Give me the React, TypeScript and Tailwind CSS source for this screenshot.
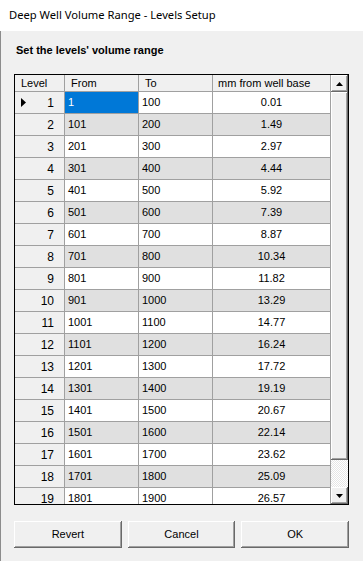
import React from "react"

const mm = [
  "0.01", "1.49", "2.97", "4.44", "5.92", "7.39", "8.87", "10.34", "11.82", "13.29",
  "14.77", "16.24", "17.72", "19.19", "20.67", "22.14", "23.62", "25.09", "26.57",
]

const rows = mm.map((v, i) => ({
  level: i + 1,
  from: String(i * 100 + 1),
  to: String((i + 1) * 100),
  mm: v,
}))

const raised =
  "bg-[#f0f0f0] shadow-[inset_-1px_-1px_#696969,inset_1px_1px_#ffffff,inset_-2px_-2px_#a0a0a0,inset_2px_2px_#f0f0f0]"

function ScrollBtn({ up }: { up?: boolean }) {
  return (
    <div className={`h-[17px] shrink-0 flex items-center justify-center ${raised}`}>
      <svg width="7" height="4" viewBox="0 0 7 4">
        {up ? <path d="M3.5 0 L7 4 L0 4 Z" fill="#000" /> : <path d="M0 0 L7 0 L3.5 4 Z" fill="#000" />}
      </svg>
    </div>
  )
}

export default function App() {
  return (
    <div
      className="w-[363px] h-[561px] flex flex-col bg-[#f0f0f0] text-black overflow-hidden"
      style={{ fontFamily: '"Liberation Sans", Arial, sans-serif' }}
    >
      {/* Title bar */}
      <div
        className="h-[31px] shrink-0 bg-white flex items-center pl-[9px] text-[11.2px] text-black"
        style={{ fontFamily: '"Noto Sans", "Open Sans", sans-serif' }}
      >
        Deep Well Volume Range - Levels Setup
      </div>

      <div className="flex-1 flex flex-col border-l border-[#8c8c8c] pl-[13px] pr-[14px]">
        <div className="pt-[12px] pl-[2px] h-[43px] text-[11px] leading-[14px] font-bold">
          Set the levels' volume range
        </div>

        {/* Grid */}
        <div className="h-[431px] border border-black flex bg-[#f0f0f0] text-[11px]">
          <div className="flex-1 flex flex-col overflow-hidden">
            <div className="h-[17px] shrink-0 flex border-b border-[#a0a0a0] bg-[#f0f0f0]">
              <div className="w-[50px] border-r border-[#a0a0a0] pl-[6px] leading-[16px]">Level</div>
              <div className="w-[74px] border-r border-[#a0a0a0] pl-[6px] leading-[16px]">From</div>
              <div className="w-[74px] border-r border-[#a0a0a0] pl-[6px] leading-[16px]">To</div>
              <div className="flex-1 border-r border-[#a0a0a0] pl-[5px] leading-[16px]">mm from well base</div>
            </div>
            {rows.map((r, i) => {
              const bg = i % 2 === 0 ? "bg-white" : "bg-[#e0e0e0]"
              return (
                <div key={r.level} className="h-[22px] shrink-0 flex border-b border-[#a0a0a0]">
                  <div className="w-[50px] relative border-r border-[#a0a0a0] bg-[#f0f0f0] flex items-center justify-end pr-[10px]">
                    {i === 0 && (
                      <svg className="absolute left-[6px] top-[6px]" width="5" height="9" viewBox="0 0 5 9">
                        <path d="M0 0 L5 4.5 L0 9 Z" fill="#000" />
                      </svg>
                    )}
                    <span className="text-[12px]">{r.level}</span>
                  </div>
                  <div
                    className={`w-[74px] border-r border-[#a0a0a0] flex items-center pl-[3px] ${
                      i === 0 ? "bg-[#0078d7] text-white" : bg
                    }`}
                  >
                    {r.from}
                  </div>
                  <div className={`w-[74px] border-r border-[#a0a0a0] flex items-center pl-[3px] ${bg}`}>{r.to}</div>
                  <div className={`flex-1 border-r border-[#a0a0a0] flex items-center justify-center ${bg}`}>{r.mm}</div>
                </div>
              )
            })}
          </div>

          {/* Scrollbar */}
          <div className="w-[17px] shrink-0 flex flex-col bg-[repeating-conic-gradient(#ffffff_0%_25%,#e6e6e6_0%_50%)] bg-[length:2px_2px]">
            <ScrollBtn up />
            <div className={`h-[368px] shrink-0 ${raised}`} />
            <div className="flex-1" />
            <ScrollBtn />
          </div>
        </div>

        {/* Buttons */}
        <div className="mt-[16px] grid grid-cols-3 gap-[6px] text-[11px]">
          {["Revert", "Cancel", "OK"].map((b) => (
            <div key={b} className={`h-[27px] flex items-center justify-center ${raised}`}>
              {b}
            </div>
          ))}
        </div>
      </div>
    </div>
  )
}
